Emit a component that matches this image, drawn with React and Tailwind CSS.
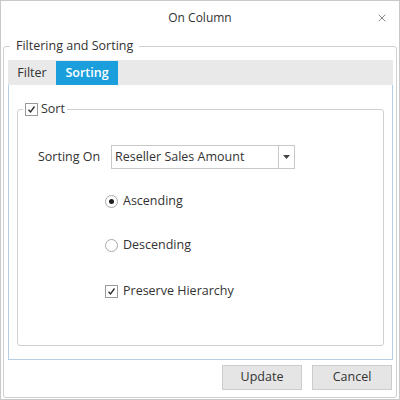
import { X } from 'lucide-react'

function CheckBox({ checked }) {
  return (
    <span className="inline-flex items-center justify-center w-[13px] h-[13px] border border-[#9a9a9a] bg-white shrink-0">
      {checked && (
        <svg width="9" height="9" viewBox="0 0 9 9">
          <path d="M1.5 4.8 L3.5 7 L7.5 1.5" fill="none" stroke="#2b2b2b" strokeWidth="1.3" />
        </svg>
      )}
    </span>
  )
}

function Radio({ checked }) {
  return (
    <span className="inline-flex items-center justify-center w-[13px] h-[13px] rounded-full border border-[#a8a8a8] bg-white shrink-0">
      {checked && <span className="w-[5px] h-[5px] rounded-full bg-[#1e1e1e]" />}
    </span>
  )
}

export default function App() {
  return (
    <div
      className="w-[400px] h-[400px] border border-[#c9c9c9] bg-white flex flex-col text-[#333] text-[12.5px]"
      style={{ fontFamily: '"Open Sans", "Noto Sans", sans-serif' }}
    >
      {/* title bar */}
      <div className="h-[35px] shrink-0 flex items-center justify-center relative">
        <span className="text-[12px] text-[#333] mt-[-1px]">On Column</span>
        <X className="absolute right-[11px] top-[11px] text-[#888]" size={12} strokeWidth={2} />
      </div>

      {/* Filtering and Sorting group */}
      <fieldset className="mx-[2px] mb-[1px] flex-1 border border-[#d0d0d0] rounded-[3px] flex flex-col min-h-0">
        <legend className="ml-[6px] px-[6px] leading-[20px]">Filtering and Sorting</legend>

        <div className="flex-1 pl-[4px] pr-[3px] pt-[4px] pb-[7px] flex flex-col min-h-0">
          {/* tabs */}
          <div className="h-[25px] bg-[#e9e9e9] flex shrink-0">
            <div className="w-[48px] flex items-center justify-center pt-[1px]">Filter</div>
            <div className="w-[62px] mt-[1px] bg-[#1a9fdc] text-white font-semibold flex items-center justify-center">
              Sorting
            </div>
          </div>

          {/* tab panel */}
          <div className="flex-1 border border-t-0 border-[#b6cde3] px-[8px] pt-[14px] pb-[13px] flex flex-col min-h-0">
            <fieldset className="flex-1 border border-[#d0d0d0] rounded-[3px]">
              <legend className="ml-[5px] px-[2px] leading-[20px] flex items-center gap-[3px]">
                <CheckBox checked />
                <span>Sort</span>
              </legend>

              <div className="pl-[20px] pr-[8px] pt-[26px]">
                <div className="flex items-center gap-[13px]">
                  <span className="w-[60px] shrink-0 whitespace-nowrap">Sorting On</span>
                  <div className="w-[184px] h-[24px] border border-[#c8c8c8] flex items-center shrink-0">
                    <span className="flex-1 pl-[3px] whitespace-nowrap">Reseller Sales Amount</span>
                    <div className="w-[16px] h-full border-l border-[#c8c8c8] flex items-center justify-center">
                      <svg width="7" height="4" viewBox="0 0 7 4">
                        <path d="M0 0 H7 L3.5 4 Z" fill="#444" />
                      </svg>
                    </div>
                  </div>
                </div>

                <div className="pl-[67px] mt-[22px] flex flex-col gap-[24px]">
                  <label className="flex items-center gap-[5px] h-[20px]">
                    <Radio checked />
                    <span>Ascending</span>
                  </label>
                  <label className="flex items-center gap-[5px] h-[20px]">
                    <Radio />
                    <span>Descending</span>
                  </label>
                  <label className="flex items-center gap-[5px] h-[20px] mt-[2px]">
                    <CheckBox checked />
                    <span>Preserve Hierarchy</span>
                  </label>
                </div>
              </div>
            </fieldset>
          </div>

          {/* buttons */}
          <div className="flex justify-end gap-[10px] mt-[5px] pr-[1px] shrink-0">
            <button className="w-[80px] h-[25px] bg-[#e5e5e5] border border-[#cccccc]">Update</button>
            <button className="w-[80px] h-[25px] bg-[#e5e5e5] border border-[#cccccc]">Cancel</button>
          </div>
        </div>
      </fieldset>
    </div>
  )
}
